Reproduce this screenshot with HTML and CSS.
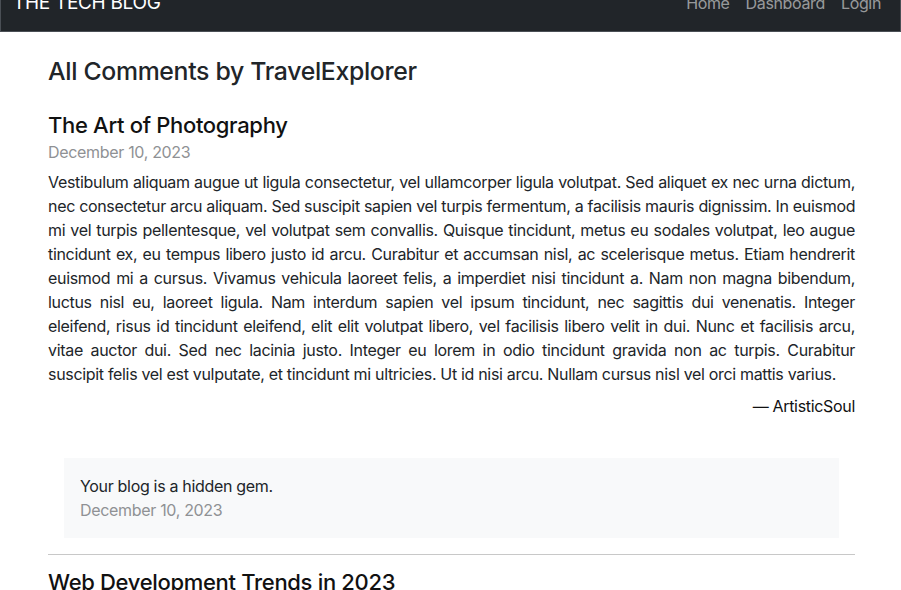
FILE: index.html
```html
<!DOCTYPE html>
<html lang="en">
<head>
<meta charset="utf-8">
<title>All Comments by TravelExplorer</title>
<link rel="stylesheet" href="styles.css">
</head>
<body>
<nav class="navbar">
  <a class="brand" href="#">THE TECH BLOG</a>
  <div class="nav-links">
    <a href="#">Home</a>
    <a href="#">Dashboard</a>
    <a href="#">Login</a>
  </div>
</nav>
<main class="container">
  <h1 class="page-title">All Comments by TravelExplorer</h1>
  <article class="post">
    <h2 class="post-title">The Art of Photography</h2>
    <div class="date">December 10, 2023</div>
    <p class="post-body">
      <span class="line">Vestibulum aliquam augue ut ligula consectetur, vel ullamcorper ligula volutpat. Sed aliquet ex nec urna dictum,</span>
      <span class="line">nec consectetur arcu aliquam. Sed suscipit sapien vel turpis fermentum, a facilisis mauris dignissim. In euismod</span>
      <span class="line">mi vel turpis pellentesque, vel volutpat sem convallis. Quisque tincidunt, metus eu sodales volutpat, leo augue</span>
      <span class="line">tincidunt ex, eu tempus libero justo id arcu. Curabitur et accumsan nisl, ac scelerisque metus. Etiam hendrerit</span>
      <span class="line">euismod mi a cursus. Vivamus vehicula laoreet felis, a imperdiet nisi tincidunt a. Nam non magna bibendum,</span>
      <span class="line">luctus nisl eu, laoreet ligula. Nam interdum sapien vel ipsum tincidunt, nec sagittis dui venenatis. Integer</span>
      <span class="line">eleifend, risus id tincidunt eleifend, elit elit volutpat libero, vel facilisis libero velit in dui. Nunc et facilisis arcu,</span>
      <span class="line">vitae auctor dui. Sed nec lacinia justo. Integer eu lorem in odio tincidunt gravida non ac turpis. Curabitur</span>
      <span class="line last">suscipit felis vel est vulputate, et tincidunt mi ultricies. Ut id nisi arcu. Nullam cursus nisl vel orci mattis varius.</span>
    </p>
    <div class="author">— ArtisticSoul</div>
    <div class="comment">
      <div class="comment-text">Your blog is a hidden gem.</div>
      <div class="date">December 10, 2023</div>
    </div>
  </article>
  <hr class="divider">
  <article class="post">
    <h2 class="post-title">Web Development Trends in 2023</h2>
  </article>
</main>
</body>
</html>
```
FILE: styles.css
```css
* { box-sizing: border-box; }
html, body { margin: 0; padding: 0; }
body {
  font-family: Inter, "Noto Sans", "Liberation Sans", sans-serif;
  font-size: 16px;
  line-height: 24px;
  letter-spacing: -0.32px;
  color: #212529;
  background: #fff;
  overflow: hidden;
}
.navbar {
  display: flex;
  justify-content: space-between;
  align-items: center;
  height: 58px;
  margin-top: -26px;
  padding: 0 11px 0 12px;
  background: #212529;
  border: 1px solid #4a4f55;
  border-top: none;
}
.brand {
  color: #fff;
  text-decoration: none;
  font-size: 19px;
  line-height: 30px;
  letter-spacing: -0.3px;
  font-weight: 400;
}
.nav-links { display: flex; }
.nav-links a {
  color: rgba(255,255,255,0.55);
  text-decoration: none;
  padding: 0 8px;
  font-size: 16px;
  line-height: 24px;
  letter-spacing: -0.35px;
}
.container {
  padding: 0 46px 0 48px;
}
.page-title {
  font-size: 24.8px;
  line-height: 31px;
  font-weight: 500;
  margin: 24px 0 25px;
  color: #212529;
}
.post-title {
  font-size: 22px;
  line-height: 26px;
  font-weight: 500;
  margin: 0 0 2px;
  color: #111;
}
.date {
  color: #8f9194;
}
.post-body {
  margin: 6px 0 8px;
  text-align: justify;
}
.line {
  display: block;
  white-space: nowrap;
  text-align: justify;
  text-align-last: justify;
}
.line.last {
  text-align-last: left;
}
.author {
  text-align: right;
  color: #111;
  margin-bottom: 40px;
}
.comment {
  margin: 0 16px;
  padding: 16px;
  background: #f8f9fa;
}
.comment-text { color: #212529; }
.divider {
  margin: 16px 0 14px;
  border: none;
  border-top: 1px solid #c8c8c8;
}
```
